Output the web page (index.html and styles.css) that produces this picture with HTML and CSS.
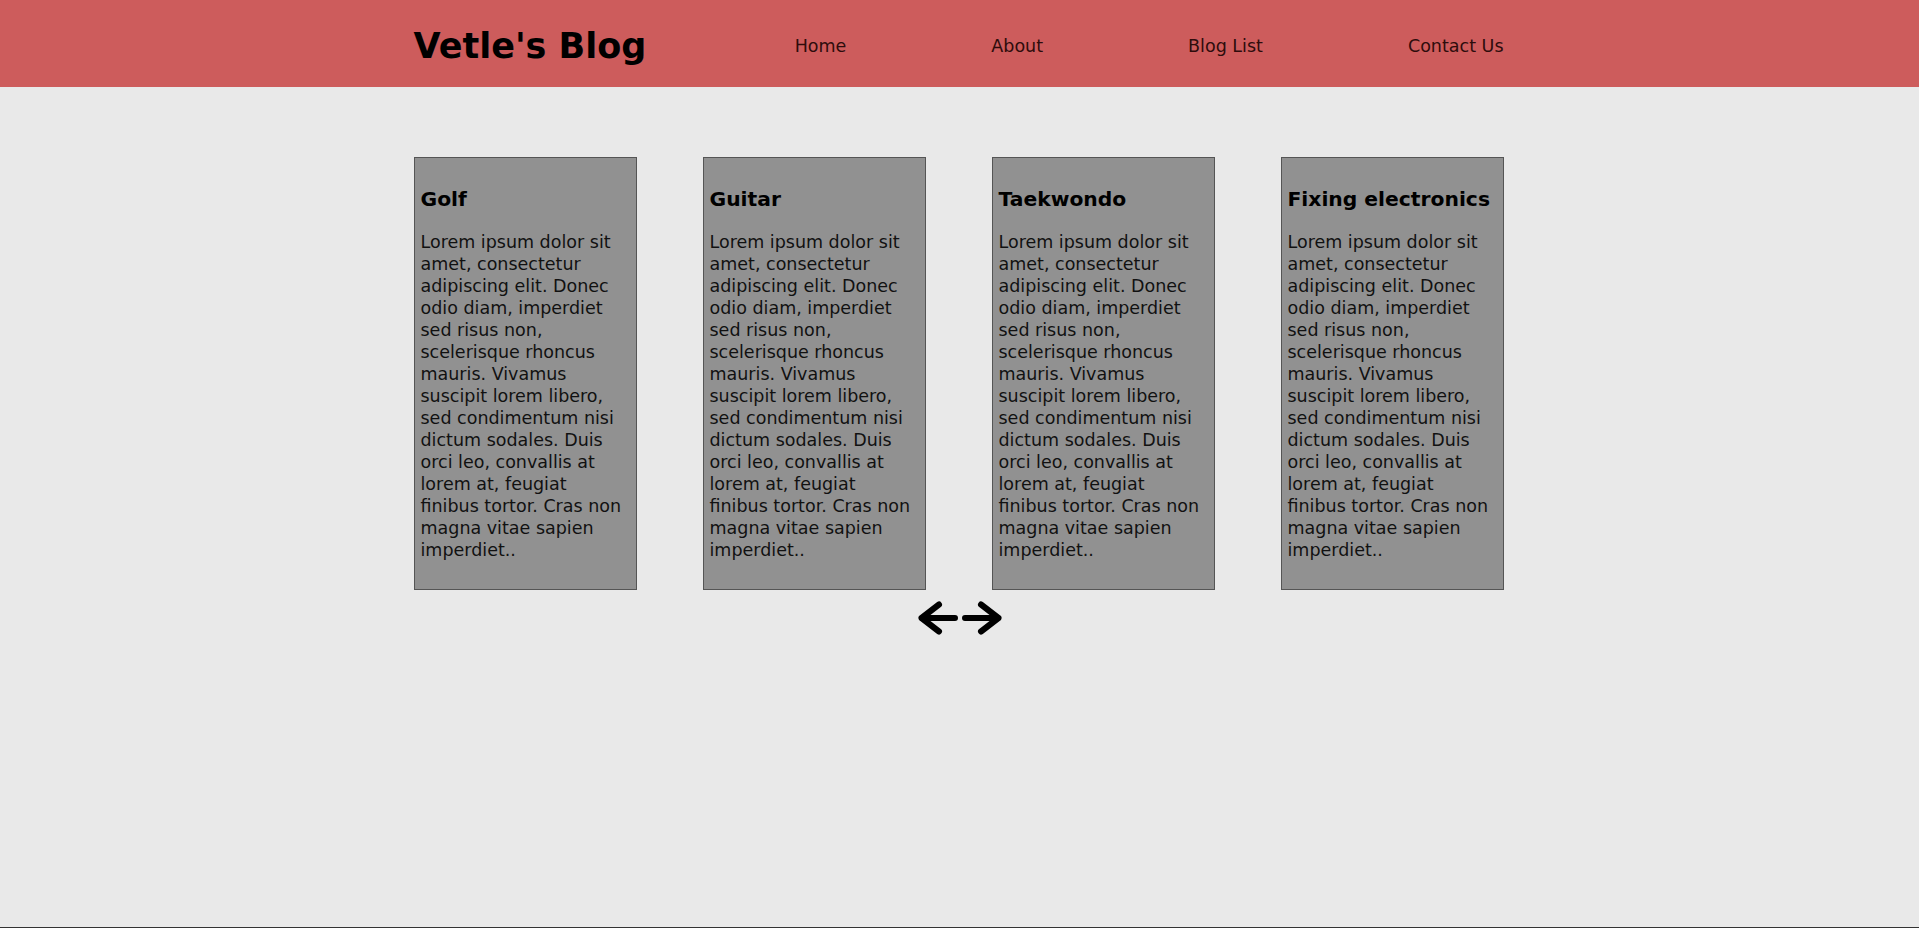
FILE: index.html
```html
<!DOCTYPE html>
<html lang="en">
<head>
<meta charset="utf-8">
<title>Vetle's Blog</title>
<link rel="stylesheet" href="styles.css">
</head>
<body>
<div class="page">
  <header class="site-header">
    <div class="container header-inner">
      <h1 class="logo">Vetle's Blog</h1>
      <nav class="nav">
        <a class="nav-link" href="#">Home</a>
        <a class="nav-link" href="#">About</a>
        <a class="nav-link" href="#">Blog List</a>
        <a class="nav-link" href="#">Contact Us</a>
      </nav>
    </div>
  </header>
  <main class="main">
    <div class="container cards">
      <article class="card">
        <h3 class="card-title">Golf</h3>
        <p class="card-text">Lorem ipsum dolor sit amet, consectetur adipiscing elit. Donec odio diam, imperdiet sed risus non, scelerisque rhoncus mauris. Vivamus suscipit lorem libero, sed condimentum nisi dictum sodales. Duis orci leo, convallis at lorem at, feugiat finibus tortor. Cras non magna vitae sapien imperdiet..</p>
      </article>
      <article class="card">
        <h3 class="card-title">Guitar</h3>
        <p class="card-text">Lorem ipsum dolor sit amet, consectetur adipiscing elit. Donec odio diam, imperdiet sed risus non, scelerisque rhoncus mauris. Vivamus suscipit lorem libero, sed condimentum nisi dictum sodales. Duis orci leo, convallis at lorem at, feugiat finibus tortor. Cras non magna vitae sapien imperdiet..</p>
      </article>
      <article class="card">
        <h3 class="card-title">Taekwondo</h3>
        <p class="card-text">Lorem ipsum dolor sit amet, consectetur adipiscing elit. Donec odio diam, imperdiet sed risus non, scelerisque rhoncus mauris. Vivamus suscipit lorem libero, sed condimentum nisi dictum sodales. Duis orci leo, convallis at lorem at, feugiat finibus tortor. Cras non magna vitae sapien imperdiet..</p>
      </article>
      <article class="card">
        <h3 class="card-title">Fixing electronics</h3>
        <p class="card-text">Lorem ipsum dolor sit amet, consectetur adipiscing elit. Donec odio diam, imperdiet sed risus non, scelerisque rhoncus mauris. Vivamus suscipit lorem libero, sed condimentum nisi dictum sodales. Duis orci leo, convallis at lorem at, feugiat finibus tortor. Cras non magna vitae sapien imperdiet..</p>
      </article>
    </div>
    <div class="arrows">
      <button class="arrow-btn" aria-label="Previous">
        <svg class="arrow" viewBox="0 0 40 34" width="40" height="34">
          <path d="M21 3.5 L3.5 17 L21 30.5 M3.5 17 H37" fill="none" stroke="#000" stroke-width="6" stroke-linecap="round" stroke-linejoin="round"/>
        </svg>
      </button>
      <button class="arrow-btn" aria-label="Next">
        <svg class="arrow" viewBox="0 0 40 34" width="40" height="34">
          <path d="M19 3.5 L36.5 17 L19 30.5 M36.5 17 H3" fill="none" stroke="#000" stroke-width="6" stroke-linecap="round" stroke-linejoin="round"/>
        </svg>
      </button>
    </div>
  </main>
  <footer class="site-footer"></footer>
</div>
</body>
</html>
```

FILE: styles.css
```css
* {
  box-sizing: border-box;
}

html, body {
  margin: 0;
  padding: 0;
}

body {
  background: #e9e9e9;
  font-family: "DejaVu Sans", Verdana, sans-serif;
  color: #111;
}

.page {
  min-height: 100vh;
  display: flex;
  flex-direction: column;
}

.container {
  width: 1090px;
  margin-left: calc(50% - 546px);
}

.site-header {
  background: #cd5c5c;
  height: 87px;
  padding-top: 4px;
  display: flex;
}

.header-inner {
  display: flex;
  align-items: center;
  justify-content: space-between;
}

.logo {
  margin: 0;
  font-size: 35px;
  line-height: 40px;
  font-weight: bold;
  color: #000;
}

.nav {
  display: flex;
  gap: 145px;
}

.nav-link {
  font-size: 17.5px;
  line-height: 22px;
  color: #2e0c0c;
  text-decoration: none;
}

.main {
  flex: 1;
}

.cards {
  display: flex;
  justify-content: space-between;
  margin-top: 70px;
}

.card {
  width: 223px;
  background: #919191;
  border: 1px solid #555;
  padding: 9px 6px 10px;
}

.card-title {
  margin: 20px 0;
  font-size: 20.3px;
  line-height: 24px;
  font-weight: bold;
  color: #000;
}

.card-text {
  margin: 17.5px 0;
  font-size: 17.5px;
  line-height: 22px;
  color: #111;
}

.arrows {
  display: flex;
  justify-content: center;
  gap: 4px;
  margin-top: 11px;
}

.arrow-btn {
  background: none;
  border: 0;
  padding: 0;
  margin: 0;
  display: flex;
  cursor: pointer;
}

.arrow {
  display: block;
}

.site-footer {
  height: 1px;
  background: #333;
}
```
